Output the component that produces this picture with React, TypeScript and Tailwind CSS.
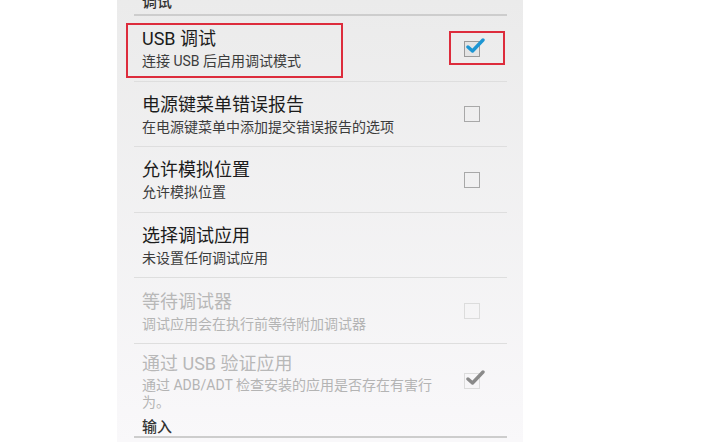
import React from 'react';

type Pref = {
  id: string;
  title: string;
  summary: string;
  checked?: boolean;
  disabled?: boolean;
  hasBox?: boolean;
  highlight?: boolean;
};

const prefs: Pref[] = [
  { id: 'usb', title: 'USB 调试', summary: '连接 USB 后启用调试模式', checked: true, hasBox: true, highlight: true },
  { id: 'bugreport', title: '电源键菜单错误报告', summary: '在电源键菜单中添加提交错误报告的选项', hasBox: true },
  { id: 'mock', title: '允许模拟位置', summary: '允许模拟位置', hasBox: true },
  { id: 'debugapp', title: '选择调试应用', summary: '未设置任何调试应用' },
  { id: 'wait', title: '等待调试器', summary: '调试应用会在执行前等待附加调试器', disabled: true, hasBox: true },
];

const font = { fontFamily: 'Roboto, "Noto Sans CJK SC", sans-serif' };

function CheckBox({ checked, disabled, highlight }: { checked?: boolean; disabled?: boolean; highlight?: boolean }) {
  const border = disabled ? 'border-[#dcdcdc]' : highlight ? 'border-[#9a9a9a]' : 'border-[#a8a8a8]';
  return (
    <div className={`relative w-[16px] h-[16px] border-[1.5px] ${border} ${highlight ? 'bg-[#e4e4e4]' : ''}`}>
      {checked && (
        <svg className="absolute left-[1px] top-[-5px]" width="20" height="18" viewBox="0 0 20 18">
          <path
            d="M2 10 L6.5 14 L17 3"
            fill="none"
            stroke={disabled ? '#8a8a8a' : '#1d96d3'}
            strokeWidth="3.4"
            strokeLinecap="round"
            strokeLinejoin="round"
          />
        </svg>
      )}
    </div>
  );
}

function Row({ pref }: { pref: Pref }) {
  const titleColor = pref.disabled ? 'text-[#b8b8b8]' : 'text-[#1c1c1c]';
  const sumColor = pref.disabled ? 'text-[#b4b4b4]' : 'text-[#3c3c3c]';
  return (
    <div className="relative h-[65.6px] shrink-0 border-b border-[#dedede] flex items-center">
      {pref.highlight && (
        <div className="absolute left-[-8px] top-[7px] w-[217px] h-[55px] border-2 border-[#dd2c3c]" />
      )}
      <div className="flex-1 pl-[8px] pt-[2px] flex flex-col">
        <div className={`text-[18px] leading-[24px] ${titleColor}`}>{pref.title}</div>
        <div className={`text-[14px] leading-[20px] ${sumColor}`}>{pref.summary}</div>
      </div>
      {pref.hasBox && (
        <div className="relative w-[57px] h-full flex items-center pl-[14px] pt-[1px]">
          {pref.highlight && (
            <div className="absolute left-[-1px] top-[15px] w-[56px] h-[34px] border-2 border-[#dd2c3c]" />
          )}
          <CheckBox checked={pref.checked} disabled={pref.disabled} highlight={pref.highlight} />
        </div>
      )}
    </div>
  );
}

export default function App() {
  return (
    <div className="w-[711px] h-[442px] bg-white flex justify-center overflow-hidden" style={font}>
      <div className="w-[406px] h-full ml-[-71px] bg-gradient-to-b from-[#ebebeb] to-[#f9f8fa] pl-[17px] pr-[16px] flex flex-col">
        <div className="mt-[-8px] h-[24px] shrink-0 border-b-2 border-[#cdcdcd] pl-[8px] text-[15px] leading-[20px] font-medium text-[#333]">
          调试
        </div>
        {prefs.map((p) => (
          <Row key={p.id} pref={p} />
        ))}
        <div className="h-[70px] shrink-0 flex items-start pt-[8px]">
          <div className="flex-1 pl-[8px] flex flex-col">
            <div className="text-[18px] leading-[24px] text-[#b8b8b8]">通过 USB 验证应用</div>
            <div className="w-[294px] text-[14px] leading-[17px] text-[#b4b4b4] pt-[1px]">
              通过 ADB/ADT 检查安装的应用是否存在有害行为。
            </div>
          </div>
          <div className="w-[57px] pl-[14px] pt-[21px]">
            <CheckBox checked disabled />
          </div>
        </div>
        <div className="h-[24px] shrink-0 border-b-2 border-[#cdcdcd] pl-[8px] pt-[3px] text-[15px] leading-[20px] font-medium text-[#333]">
          输入
        </div>
      </div>
    </div>
  );
}
